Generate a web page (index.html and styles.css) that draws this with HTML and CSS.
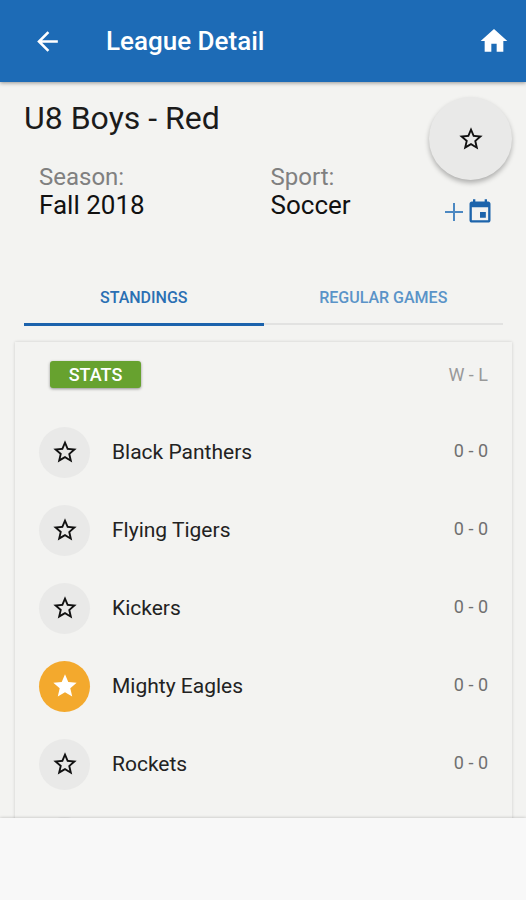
FILE: index.html
```html
<!DOCTYPE html>
<html lang="en">
<head>
<meta charset="utf-8">
<meta name="viewport" content="width=device-width, initial-scale=1">
<title>League Detail</title>
<link rel="stylesheet" href="styles.css">
</head>
<body>
<svg class="sprite" aria-hidden="true">
  <symbol id="star-outline" viewBox="0 0 24 24"><path d="M22 9.24l-7.19-.62L12 2 9.19 8.63 2 9.24l5.46 4.73L5.82 21 12 17.27 18.18 21l-1.63-7.03L22 9.24zM12 15.4l-3.76 2.27 1-4.28-3.32-2.88 4.38-.38L12 6.1l1.71 4.04 4.38.38-3.32 2.88 1 4.28L12 15.4z"/></symbol>
  <symbol id="star" viewBox="0 0 24 24"><path d="M12 17.27L18.18 21l-1.64-7.03L22 9.24l-7.19-.61L12 2 9.19 8.63 2 9.24l5.46 4.73L5.82 21z"/></symbol>
</svg>
<header class="app-bar">
  <button class="icon-button" type="button" aria-label="Back">
    <svg class="back-icon" viewBox="0 0 24 24"><path d="M20 11H7.83l5.59-5.59L12 4l-8 8 8 8 1.41-1.41L7.83 13H20v-2z"/></svg>
  </button>
  <h1 class="app-title">League Detail</h1>
  <a class="home-link" href="#home" aria-label="Home">
    <svg class="home-icon" viewBox="0 0 24 24"><path d="M10 20v-6h4v6h5v-8h3L12 3 2 12h3v8z"/></svg>
  </a>
</header>
<main class="content">
  <section class="summary">
    <div class="info">
      <h2 class="league">U8 Boys - Red</h2>
      <dl class="facts">
        <div><dt>Season:</dt><dd>Fall 2018</dd></div>
        <div><dt>Sport:</dt><dd>Soccer</dd></div>
      </dl>
    </div>
    <div class="actions">
      <button class="favorite" type="button" aria-label="Favorite league"><svg class="star-icon"><use href="#star-outline"/></svg></button>
      <button class="calendar" type="button" aria-label="Add to calendar">
        <svg class="plus-icon" viewBox="0 0 18 18"><path d="M8 0h2v8h8v2h-8v8H8v-8H0V8h8z"/></svg>
        <svg class="calendar-icon" viewBox="0 0 24 24"><path d="M17 12h-5v5h5v-5zM16 1v2H8V1H6v2H5c-1.11 0-1.99.9-1.99 2L3 19c0 1.1.89 2 2 2h14c1.1 0 2-.9 2-2V5c0-1.1-.9-2-2-2h-1V1h-2zm3 18H5V8h14v11z"/></svg>
      </button>
    </div>
  </section>
  <nav class="tabs">
    <a class="tab active" href="#standings" aria-current="page">STANDINGS</a>
    <a class="tab" href="#games">REGULAR GAMES</a>
  </nav>
  <section class="card" id="standings">
    <table class="standings">
      <thead>
        <tr><th class="stats-cell" colspan="2"><button class="stats" type="button">STATS</button></th><th class="record">W - L</th></tr>
      </thead>
      <tbody>
        <tr><td class="mark"><button class="team-star" type="button" aria-label="Favorite Black Panthers"><svg class="star-icon"><use href="#star-outline"/></svg></button></td><td class="team">Black Panthers</td><td class="record">0 - 0</td></tr>
        <tr><td class="mark"><button class="team-star" type="button" aria-label="Favorite Flying Tigers"><svg class="star-icon"><use href="#star-outline"/></svg></button></td><td class="team">Flying Tigers</td><td class="record">0 - 0</td></tr>
        <tr><td class="mark"><button class="team-star" type="button" aria-label="Favorite Kickers"><svg class="star-icon"><use href="#star-outline"/></svg></button></td><td class="team">Kickers</td><td class="record">0 - 0</td></tr>
        <tr><td class="mark"><button class="team-star selected" type="button" aria-label="Unfavorite Mighty Eagles"><svg class="star-icon"><use href="#star"/></svg></button></td><td class="team">Mighty Eagles</td><td class="record">0 - 0</td></tr>
        <tr><td class="mark"><button class="team-star" type="button" aria-label="Favorite Rockets"><svg class="star-icon"><use href="#star-outline"/></svg></button></td><td class="team">Rockets</td><td class="record">0 - 0</td></tr>
        <tr><td class="mark"><button class="team-star" type="button" aria-label="Favorite team"><svg class="star-icon"><use href="#star-outline"/></svg></button></td><td class="team"></td><td class="record"></td></tr>
      </tbody>
    </table>
  </section>
</main>
<footer class="bottom-bar"></footer>
</body>
</html>
```
FILE: styles.css
```css
* { box-sizing: border-box; }

body {
  margin: 0;
  height: 100vh;
  display: flex;
  flex-direction: column;
  overflow: hidden;
  background: #f3f3f1;
  color: #1b1b1b;
  font-family: Roboto, "Liberation Sans", sans-serif;
}

button {
  padding: 0;
  border: 0;
  background: none;
  font: inherit;
  color: inherit;
  cursor: pointer;
}

a { color: inherit; text-decoration: none; }
svg { display: block; fill: currentColor; }
.sprite { position: absolute; width: 0; height: 0; }

.app-bar {
  flex: none;
  z-index: 1;
  display: flex;
  align-items: center;
  height: 82px;
  padding: 0 16px 0 32px;
  background: #1d6bb6;
  color: #fff;
  box-shadow: 0 1px 4px rgba(0, 0, 0, 0.4);
}

.back-icon { width: 31px; height: 31px; }
.home-icon { width: 32px; height: 32px; }

.app-title {
  flex: 1;
  margin: 0 0 0 43px;
  font-size: 26px;
  font-weight: 500;
  line-height: 32px;
}

.content { flex: 1; min-height: 0; overflow: hidden; }

.summary {
  display: flex;
  justify-content: space-between;
  padding: 15px 14px 0 24px;
}

.info { flex: 1; }

.league {
  margin: 0;
  padding-top: 3px;
  font-size: 32px;
  font-weight: 400;
  line-height: 36px;
}

.facts {
  display: grid;
  grid-template-columns: 3fr 2fr;
  margin: 27px 0 0;
  padding: 0 4px 0 15px;
}

.facts dt { color: #808080; font-size: 24px; line-height: 28px; }
.facts dd { margin: 0; color: #111; font-size: 26px; line-height: 28px; }

.actions {
  display: flex;
  flex-direction: column;
  align-items: center;
  gap: 18px;
}

.favorite {
  display: grid;
  place-items: center;
  width: 83px;
  height: 83px;
  border-radius: 50%;
  background: #e9e9e8;
  color: #111;
  box-shadow: 0 3px 5px rgba(0, 0, 0, 0.28);
}

.star-icon { width: 28px; height: 28px; }

.calendar { display: flex; align-items: center; gap: 3px; padding-right: 2px; color: #1d64ab; }
.plus-icon { width: 18px; height: 18px; fill: #4c88c2; }
.calendar-icon { width: 28px; height: 28px; }

.tabs {
  display: grid;
  grid-template-columns: 1fr 1fr;
  align-items: start;
  margin: 44px 23px 0 24px;
}

.tab {
  height: 55px;
  border-bottom: 2px solid #e2e2e1;
  color: #5a93c8;
  font-size: 16px;
  font-weight: 500;
  line-height: 56px;
  text-align: center;
}

.tab.active { height: 56px; border-bottom: 3px solid #1b62ac; color: #2a6fb3; }

.card {
  margin: 16px 14px 0 15px;
  box-shadow: 0 0 3px rgba(0, 0, 0, 0.16);
}

.standings { width: 100%; border-collapse: collapse; }
.standings th, .standings td { padding: 0; text-align: left; }
.standings thead tr { height: 71px; }
.standings tbody tr { height: 78px; }
.standings thead th { padding-bottom: 7px; }
.standings .stats-cell { padding-left: 35px; }

.stats {
  display: block;
  width: 91px;
  height: 27px;
  border-radius: 3px;
  background: #67a22f;
  color: #fff;
  font-size: 18px;
  font-weight: 500;
  line-height: 27px;
  box-shadow: 0 1px 3px rgba(0, 0, 0, 0.4);
}

.standings .mark { width: 97px; padding-left: 24px; }

.team-star {
  display: grid;
  place-items: center;
  width: 51px;
  height: 51px;
  border-radius: 50%;
  background: #e9e9e8;
  color: #111;
}

.team-star.selected { background: #f3a92d; color: #fff; }
.team { color: #222; font-size: 21px; line-height: 28px; }

.standings .record {
  padding-right: 24px;
  color: #707070;
  font-size: 18px;
  font-weight: 400;
  text-align: right;
}

.standings tbody .record { padding-bottom: 4px; }
.standings thead .record { color: #999; }

.bottom-bar {
  flex: none;
  z-index: 1;
  height: 82px;
  background: #f8f8f8;
  box-shadow: 0 0 3px rgba(0, 0, 0, 0.25);
}
```
